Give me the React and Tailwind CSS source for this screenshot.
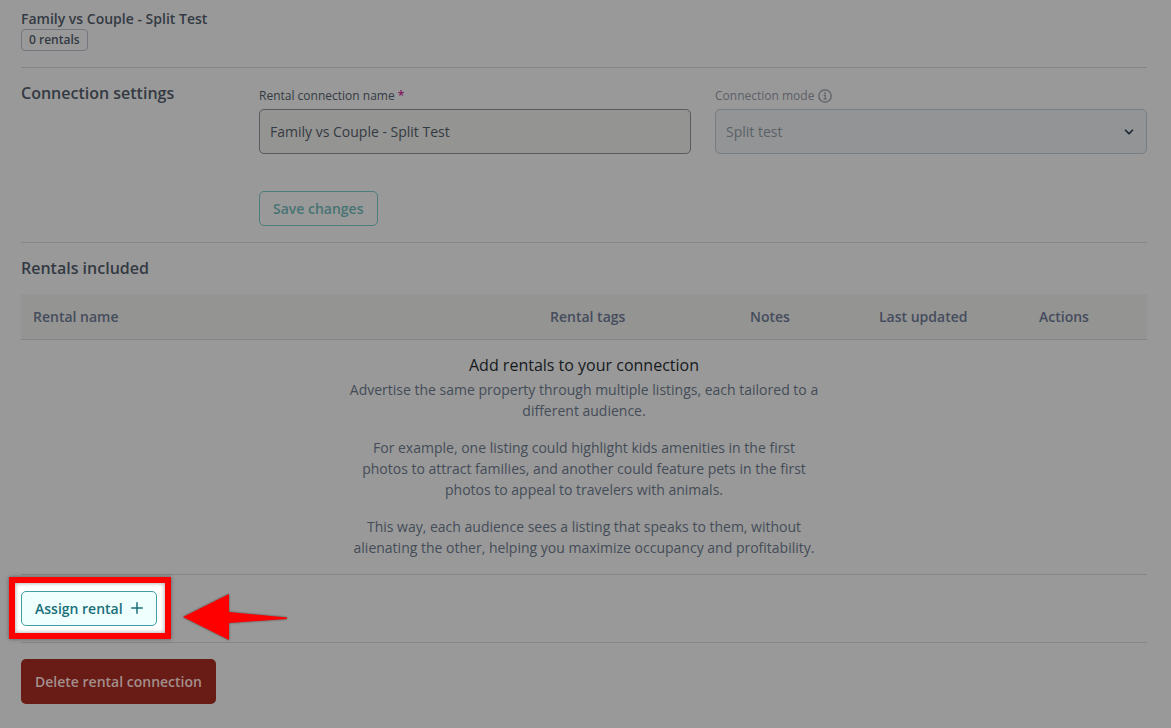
import React, { useState } from 'react';
import { ChevronDown, Plus } from 'lucide-react';

const columns = [
  { label: 'Rental name', width: 'w-auto' },
  { label: 'Rental tags', width: 'w-[200px]' },
  { label: 'Notes', width: 'w-[129px]' },
  { label: 'Last updated', width: 'w-40' },
  { label: 'Actions', width: 'w-30' },
];

function InfoIcon() {
  return (
    <svg viewBox="0 0 14 14" className="w-3.5 h-3.5" fill="none" stroke="currentColor" aria-hidden="true">
      <circle cx="7" cy="7" r="6.2" strokeWidth="1.3" />
      <circle cx="7" cy="4.1" r="0.9" fill="currentColor" stroke="none" />
      <path d="M5.6 6.4H7.2V10M5.4 10H8.8" strokeWidth="1.2" />
    </svg>
  );
}

// Red frame and arrow that point the user at the wrapped button
function Spotlight({ children }) {
  return (
    <div className="relative inline-flex">
      <div className="absolute -left-3 -right-3.5 -top-3.5 -bottom-[13px] border-6 border-[#fe0000] bg-white shadow-[0_0_4px_rgba(0,0,0,0.4),inset_0_0_4px_rgba(0,0,0,0.4)]" />
      <div className="relative">{children}</div>
      <svg
        viewBox="0 0 106 48"
        className="absolute left-full top-0.5 ml-[26px] w-[106px] h-12 drop-shadow-[0_0_1px_rgba(0,0,0,0.5)]"
        aria-hidden="true"
      >
        <path d="M0 24L46 1V19L104 24.4V26L46 30V47Z" fill="#fe0000" />
      </svg>
    </div>
  );
}

export default function App() {
  const [name, setName] = useState('Family vs Couple - Split Test');

  return (
    <main className="min-h-screen bg-[#999999] pl-[21px] pr-6 pt-2 pb-6 font-['Open_Sans',sans-serif] text-sm leading-[21px] text-[#343a43]">
      <header className="flex flex-col items-start border-b border-[#858686] pb-4">
        <h1 className="font-semibold">{name}</h1>
        <span className="rounded-sm border border-[#73777e] px-[7px] text-xs leading-5 font-semibold">0 rentals</span>
      </header>

      <section className="flex border-b border-[#858686] pt-3 pb-4">
        <h2 className="w-[238px] shrink-0 pt-px text-base leading-6 font-semibold">Connection settings</h2>
        <form className="flex-1" onSubmit={(e) => e.preventDefault()}>
          <div className="grid grid-cols-2 gap-6">
            <div>
              <label htmlFor="connection-name" className="block pt-1.5 pb-[3px] text-xs leading-5">
                Rental connection name <span className="font-semibold text-[#84105f]">*</span>
              </label>
              <input
                id="connection-name"
                type="text"
                value={name}
                onChange={(e) => setName(e.target.value)}
                className="block w-full h-[45px] rounded-[5px] border border-[#555b60] bg-[#949492] px-2.5"
              />
            </div>
            <div>
              <label htmlFor="connection-mode" className="flex items-center gap-1 pt-1.5 pb-[3px] text-xs leading-5 text-[#5c6067]">
                Connection mode
                <InfoIcon />
              </label>
              <div className="relative">
                <select
                  id="connection-mode"
                  disabled
                  className="block w-full h-[45px] appearance-none rounded-[5px] border border-[#777c80] bg-[#929495] px-2.5 text-[#5b6167] opacity-100"
                >
                  <option>Split test</option>
                </select>
                <ChevronDown className="pointer-events-none absolute right-[11px] top-4 w-3.5 h-3.5 text-[#1d2833]" strokeWidth={3} />
              </div>
            </div>
          </div>
          <button type="submit" className="mt-[37px] h-[35px] rounded-[5px] border border-[#4b7e7d] px-[13px] font-semibold text-[#477473]">
            Save changes
          </button>
        </form>
      </section>

      <section>
        <h2 className="pt-[13px] pb-[14px] text-base leading-6 font-semibold">Rentals included</h2>
        <table className="w-full table-fixed border-collapse">
          <thead>
            <tr className="h-[45px] border-b border-[#858686] bg-[#949492] text-left text-[#454c5d]">
              {columns.map((col) => (
                <th key={col.label} scope="col" className={`${col.width} px-3 font-semibold`}>
                  {col.label}
                </th>
              ))}
            </tr>
          </thead>
          <tbody>
            <tr className="border-b border-[#858686]">
              <td colSpan={columns.length} className="pt-[13px] pb-4 text-center text-[#444c58]">
                <div className="mx-auto flex max-w-[470px] flex-col gap-4">
                  <div>
                    <h3 className="pb-0.5 text-base leading-6 text-[#15191d]">Add rentals to your connection</h3>
                    <p>Advertise the same property through multiple listings, each tailored to a different audience.</p>
                  </div>
                  <p>
                    For example, one listing could highlight kids amenities in the first photos to attract families, and
                    another could feature pets in the first photos to appeal to travelers with animals.
                  </p>
                  <p>
                    This way, each audience sees a listing that speaks to them, without alienating the other, helping you
                    maximize occupancy and profitability.
                  </p>
                </div>
              </td>
            </tr>
          </tbody>
        </table>
        <div className="flex border-b border-[#858686] py-4">
          <Spotlight>
            <button
              type="button"
              className="flex h-[35px] items-center gap-[5px] rounded-[5px] border border-[#3f9ea6] bg-[#effffe] pl-[13px] pr-2.5 font-semibold text-[#1a6f79]"
            >
              Assign rental
              <Plus className="w-[18px] h-[18px]" />
            </button>
          </Spotlight>
        </div>
      </section>

      <button type="button" className="mt-4 h-[45px] rounded-[5px] bg-[#691b15] px-3.5 font-semibold text-[#a38f8d]">
        Delete rental connection
      </button>
    </main>
  );
}
